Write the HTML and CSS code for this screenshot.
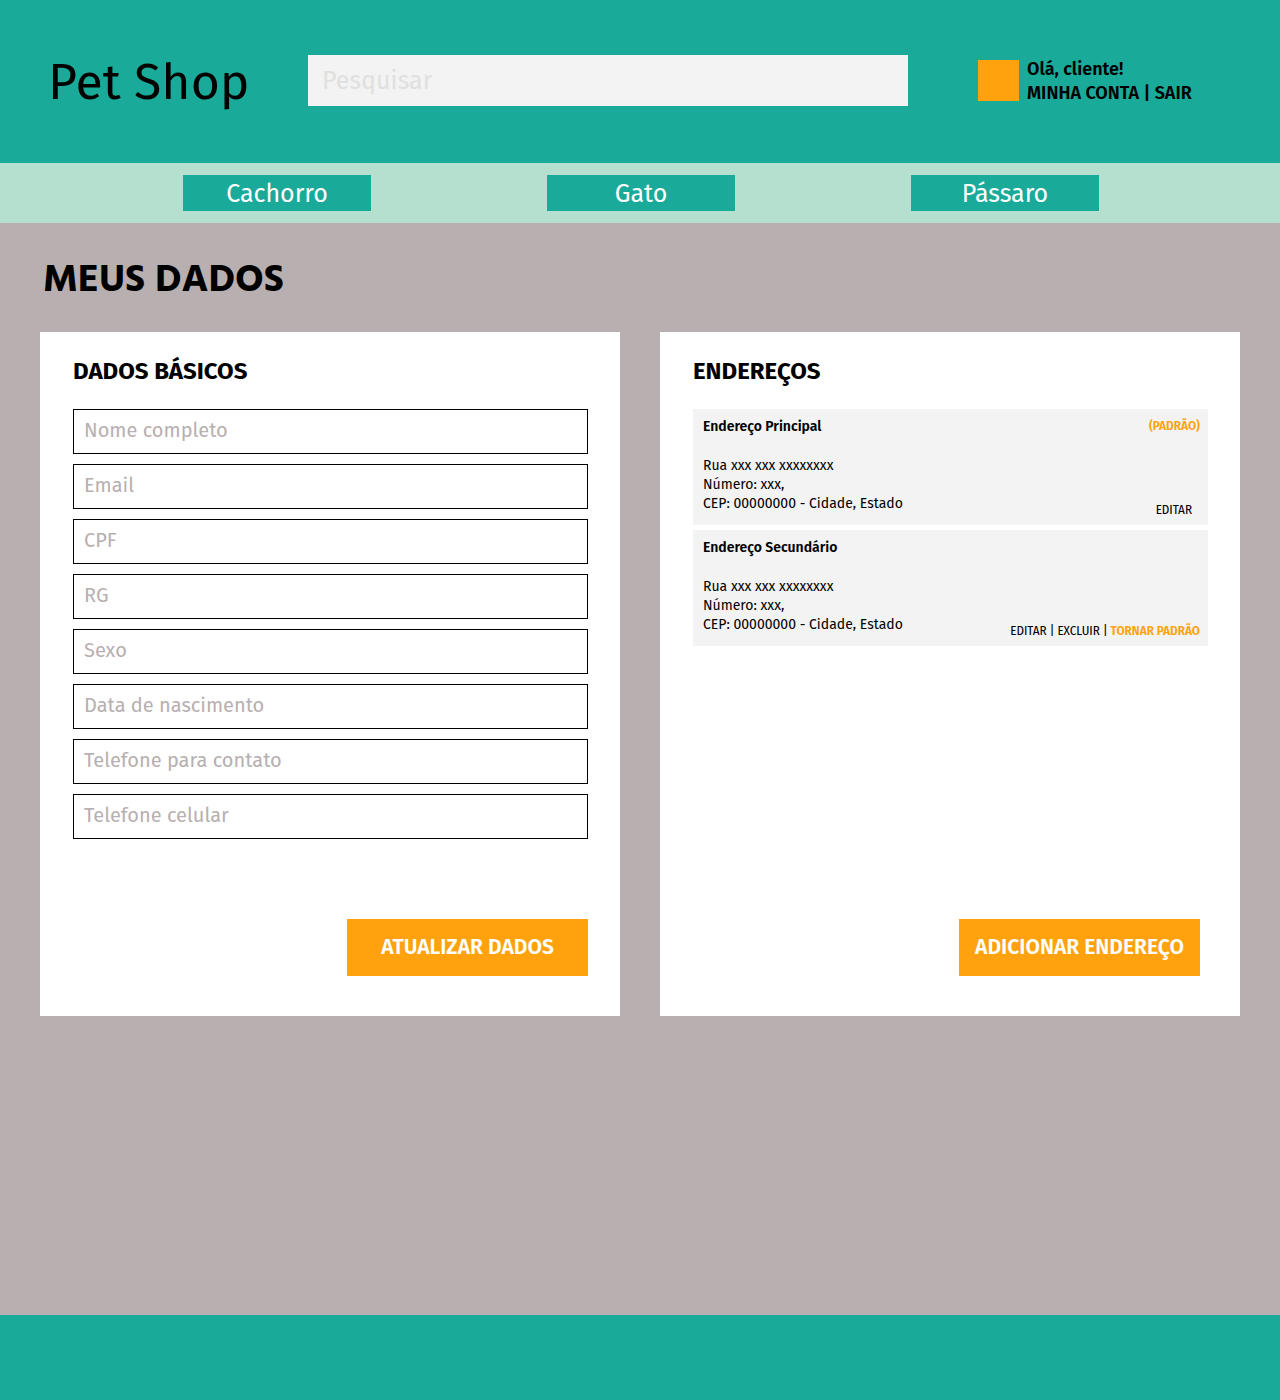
FILE: index.html
```html
<!DOCTYPE html>
<html lang="pt-BR">
<head>
<meta charset="utf-8">
<meta name="viewport" content="width=device-width, initial-scale=1">
<title>Pet Shop - Meus dados</title>
<link rel="stylesheet" href="styles.css">
</head>
<body>
<header class="header">
  <a class="brand" href="#">Pet Shop</a>
  <form class="search" role="search"><input class="search-input" type="search" aria-label="Pesquisar" placeholder="Pesquisar"></form>
  <div class="account">
    <span class="avatar"></span>
    <div class="account-text">
      <div>Olá, cliente!</div>
      <div><a href="#">MINHA CONTA</a> | <a href="#">SAIR</a></div>
    </div>
  </div>
</header>
<nav class="nav">
  <a class="nav-link" href="#">Cachorro</a>
  <a class="nav-link" href="#">Gato</a>
  <a class="nav-link" href="#">Pássaro</a>
</nav>
<main class="main">
  <h1 class="title">MEUS DADOS</h1>
  <div class="cards">
    <form class="card">
      <h2 class="card-title">DADOS BÁSICOS</h2>
      <div class="fields">
        <input class="field" type="text" aria-label="Nome completo" placeholder="Nome completo">
        <input class="field" type="email" aria-label="Email" placeholder="Email">
        <input class="field" type="text" aria-label="CPF" placeholder="CPF">
        <input class="field" type="text" aria-label="RG" placeholder="RG">
        <input class="field" type="text" aria-label="Sexo" placeholder="Sexo">
        <input class="field" type="text" aria-label="Data de nascimento" placeholder="Data de nascimento">
        <input class="field" type="tel" aria-label="Telefone para contato" placeholder="Telefone para contato">
        <input class="field" type="tel" aria-label="Telefone celular" placeholder="Telefone celular">
      </div>
      <button class="button" type="submit">ATUALIZAR DADOS</button>
    </form>
    <section class="card">
      <h2 class="card-title">ENDEREÇOS</h2>
      <div class="addresses">
        <article class="address">
          <div class="address-text">
            <h3 class="address-name">Endereço Principal</h3>
            <p>Rua xxx xxx xxxxxxxx<br>Número: xxx,<br>CEP: 00000000 - Cidade, Estado</p>
          </div>
          <div class="address-side">
            <strong class="accent">(PADRÃO)</strong>
            <div class="actions actions-single"><a href="#">EDITAR</a></div>
          </div>
        </article>
        <article class="address">
          <div class="address-text">
            <h3 class="address-name">Endereço Secundário</h3>
            <p>Rua xxx xxx xxxxxxxx<br>Número: xxx,<br>CEP: 00000000 - Cidade, Estado</p>
          </div>
          <div class="address-side">
            <div class="actions"><a href="#">EDITAR</a> | <a href="#">EXCLUIR</a> | <a class="accent" href="#">TORNAR PADRÃO</a></div>
          </div>
        </article>
      </div>
      <button class="button button-inset" type="button">ADICIONAR ENDEREÇO</button>
    </section>
  </div>
</main>
<footer class="footer"></footer>
</body>
</html>
```

FILE: styles.css
```css
* { box-sizing: border-box; }

body {
  display: flex;
  flex-direction: column;
  min-height: 100vh;
  margin: 0;
  background: #b8afb0;
  color: #000;
  font-family: "Fira Sans", "Noto Sans", sans-serif;
}

a { color: inherit; text-decoration: none; }

.header {
  display: flex;
  align-items: center;
  padding: 55px 48px 57px;
  background: #1aaa99;
}

.brand {
  flex: 0 0 260px;
  padding-top: 4px;
  font-size: 50px;
  line-height: 47px;
}

.search { flex: 0 1 600px; display: flex; }

.search-input {
  width: 100%;
  height: 51px;
  padding: 0 14px;
  border: 0;
  border-radius: 0;
  background: #f3f3f3;
  font: 25px "Fira Sans", "Noto Sans", sans-serif;
}

.search-input::placeholder { color: #e0e0e0; opacity: 1; }

.account {
  display: flex;
  align-items: center;
  gap: 8px;
  margin-left: 70px;
  font-size: 18px;
  font-weight: 600;
  line-height: 24px;
  white-space: nowrap;
}

.avatar { width: 41px; height: 41px; background: #ffa20d; }

.nav {
  display: flex;
  justify-content: center;
  gap: 176px;
  padding: 12px 0 12px 2px;
  background: #b5dfcf;
}

.nav-link {
  width: 188px;
  padding-top: 2px;
  background: #1aaa99;
  color: #fff;
  font-size: 25px;
  line-height: 34px;
  text-align: center;
}

.main { flex: 1; padding: 34px 40px 40px; }

.title {
  margin: 0 0 27px 3px;
  font-family: "Hind", "Fira Sans", "Noto Sans", sans-serif;
  font-size: 39px;
  font-weight: 700;
  line-height: 48px;
}

.cards { display: grid; grid-template-columns: 1fr 1fr; gap: 40px; }

.card {
  display: flex;
  flex-direction: column;
  min-height: 684px;
  padding: 24px 32px 40px 33px;
  background: #fff;
}

.card-title {
  margin: 0 0 23px;
  font-size: 24px;
  font-weight: 700;
  line-height: 30px;
}

.fields { display: flex; flex-direction: column; gap: 10px; }

.field {
  height: 45px;
  padding: 0 10px 3px;
  border: 1px solid #000;
  border-radius: 0;
  font: 20px "Fira Sans", "Noto Sans", sans-serif;
}

.field::placeholder { color: #b8afb0; opacity: 1; }

.button {
  align-self: flex-end;
  width: 241px;
  height: 57px;
  margin-top: auto;
  padding: 0 0 2px;
  border: 0;
  background: #ffa20d;
  color: #fff;
  font: 600 21px "Fira Sans", "Noto Sans", sans-serif;
}

.button-inset { margin-right: 8px; }

.addresses { display: flex; flex-direction: column; gap: 5px; }

.address {
  display: flex;
  justify-content: space-between;
  min-height: 116px;
  padding: 8px 8px 6px 10px;
  background: #f3f3f3;
  font-size: 14px;
  line-height: 19px;
}

.address-name { margin: 0 0 20px; font-size: 14px; font-weight: 600; }

.address p { margin: 0; }

.address-side {
  display: flex;
  flex-direction: column;
  align-items: flex-end;
  font-family: "Fira Sans Condensed", "Roboto", sans-serif;
  font-size: 13px;
  line-height: 18px;
}

.actions { margin-top: auto; }

.actions-single { padding-right: 8px; }

.accent { color: #ffa20d; font-weight: 600; }

.footer { height: 85px; background: #1aaa99; }
```
